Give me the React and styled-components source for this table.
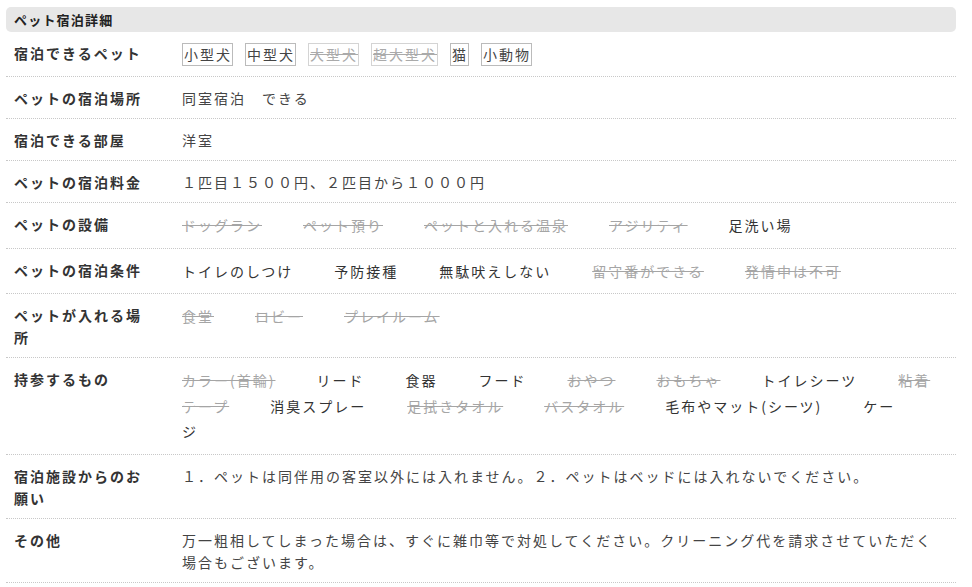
import styled, { createGlobalStyle } from "styled-components";

const GlobalStyle = createGlobalStyle`
  html, body {
    margin: 0;
    padding: 0;
    background: #fff;
  }
  body {
    font-family: "Noto Sans CJK JP", "Noto Sans", sans-serif;
    color: #333;
  }
`;

const Page = styled.section`
  width: 950px;
  padding: 7px 16px 0 6px;
`;
Page.displayName = "Page";

const Heading = styled.h2`
  margin: 0;
  height: 25px;
  padding: 0 8px;
  display: flex;
  align-items: center;

  background: #e7e7e7;
  border-radius: 5px;

  font-size: 13px;
  font-weight: bold;
  letter-spacing: 1.2px;
  color: #222;
`;
Heading.displayName = "Heading";

const Row = styled.div`
  display: grid;
  grid-template-columns: 168px 1fr;
  padding: 10px 20px 9px 8px;
  border-bottom: 1px dotted #c8c8c8;
`;
Row.displayName = "Row";

const Label = styled.div`
  padding-right: 30px;
  font-size: 14px;
  font-weight: bold;
  line-height: 22px;
  letter-spacing: 2px;
  color: #333;
`;
Label.displayName = "Label";

const Value = styled.div`
  font-size: 14px;
  line-height: ${({ $list }) => ($list ? "25.5px" : "22px")};
  letter-spacing: 2px;
  color: #444;
`;
Value.displayName = "Value";

const Tags = styled.div`
  display: flex;
  flex-wrap: wrap;
  align-items: flex-start;
  gap: 12px;
  padding: 1px 0;
  font-size: 14px;
  letter-spacing: 2px;
`;
Tags.displayName = "Tags";

const Tag = styled.span`
  display: inline-block;
  padding: 0 0 0 1px;
  line-height: 21px;
  border: 1px solid ${({ $off }) => ($off ? "#d4d4d4" : "#bbb")};
  color: ${({ $off }) => ($off ? "#aaa" : "#444")};
  text-decoration: ${({ $off }) => ($off ? "line-through" : "none")};
`;
Tag.displayName = "Tag";

const Item = styled.span`
  margin-right: 41px;
  color: ${({ $off }) => ($off ? "#a5a5a5" : "#333")};
  text-decoration: ${({ $off }) => ($off ? "line-through" : "none")};
`;
Item.displayName = "Item";

const pets = [
  ["小型犬"],
  ["中型犬"],
  ["大型犬", true],
  ["超大型犬", true],
  ["猫"],
  ["小動物"],
];

const rows = [
  { label: "ペットの宿泊場所", text: "同室宿泊　できる" },
  { label: "宿泊できる部屋", text: "洋室" },
  {
    label: "ペットの宿泊料金",
    text: "１匹目１５００円、２匹目から１０００円",
  },
  {
    label: "ペットの設備",
    items: [
      ["ドッグラン", true],
      ["ペット預り", true],
      ["ペットと入れる温泉", true],
      ["アジリティ", true],
      ["足洗い場"],
    ],
  },
  {
    label: "ペットの宿泊条件",
    items: [
      ["トイレのしつけ"],
      ["予防接種"],
      ["無駄吠えしない"],
      ["留守番ができる", true],
      ["発情中は不可", true],
    ],
  },
  {
    label: "ペットが入れる場所",
    items: [
      ["食堂", true],
      ["ロビー", true],
      ["プレイルーム", true],
    ],
  },
  {
    label: "持参するもの",
    items: [
      ["カラー(首輪)", true],
      ["リード"],
      ["食器"],
      ["フード"],
      ["おやつ", true],
      ["おもちゃ", true],
      ["トイレシーツ"],
      ["粘着テープ", true],
      ["消臭スプレー"],
      ["足拭きタオル", true],
      ["バスタオル", true],
      ["毛布やマット(シーツ)"],
      ["ケージ"],
    ],
  },
  {
    label: "宿泊施設からのお願い",
    text: "１．ペットは同伴用の客室以外には入れません。２．ペットはベッドには入れないでください。",
  },
  {
    label: "その他",
    text: "万一粗相してしまった場合は、すぐに雑巾等で対処してください。クリーニング代を請求させていただく場合もございます。",
  },
];

export default function App() {
  return (
    <>
      <GlobalStyle />
      <Page>
        <Heading>ペット宿泊詳細</Heading>
        <Row>
          <Label>宿泊できるペット</Label>
          <Tags>
            {pets.map(([name, off]) => (
              <Tag key={name} $off={off}>
                {name}
              </Tag>
            ))}
          </Tags>
        </Row>
        {rows.map((row) => (
          <Row key={row.label}>
            <Label>{row.label}</Label>
            {row.items ? (
              <Value $list>
                {row.items.map(([name, off]) => (
                  <Item key={name} $off={off}>
                    {name}
                  </Item>
                ))}
              </Value>
            ) : (
              <Value>{row.text}</Value>
            )}
          </Row>
        ))}
      </Page>
    </>
  );
}
